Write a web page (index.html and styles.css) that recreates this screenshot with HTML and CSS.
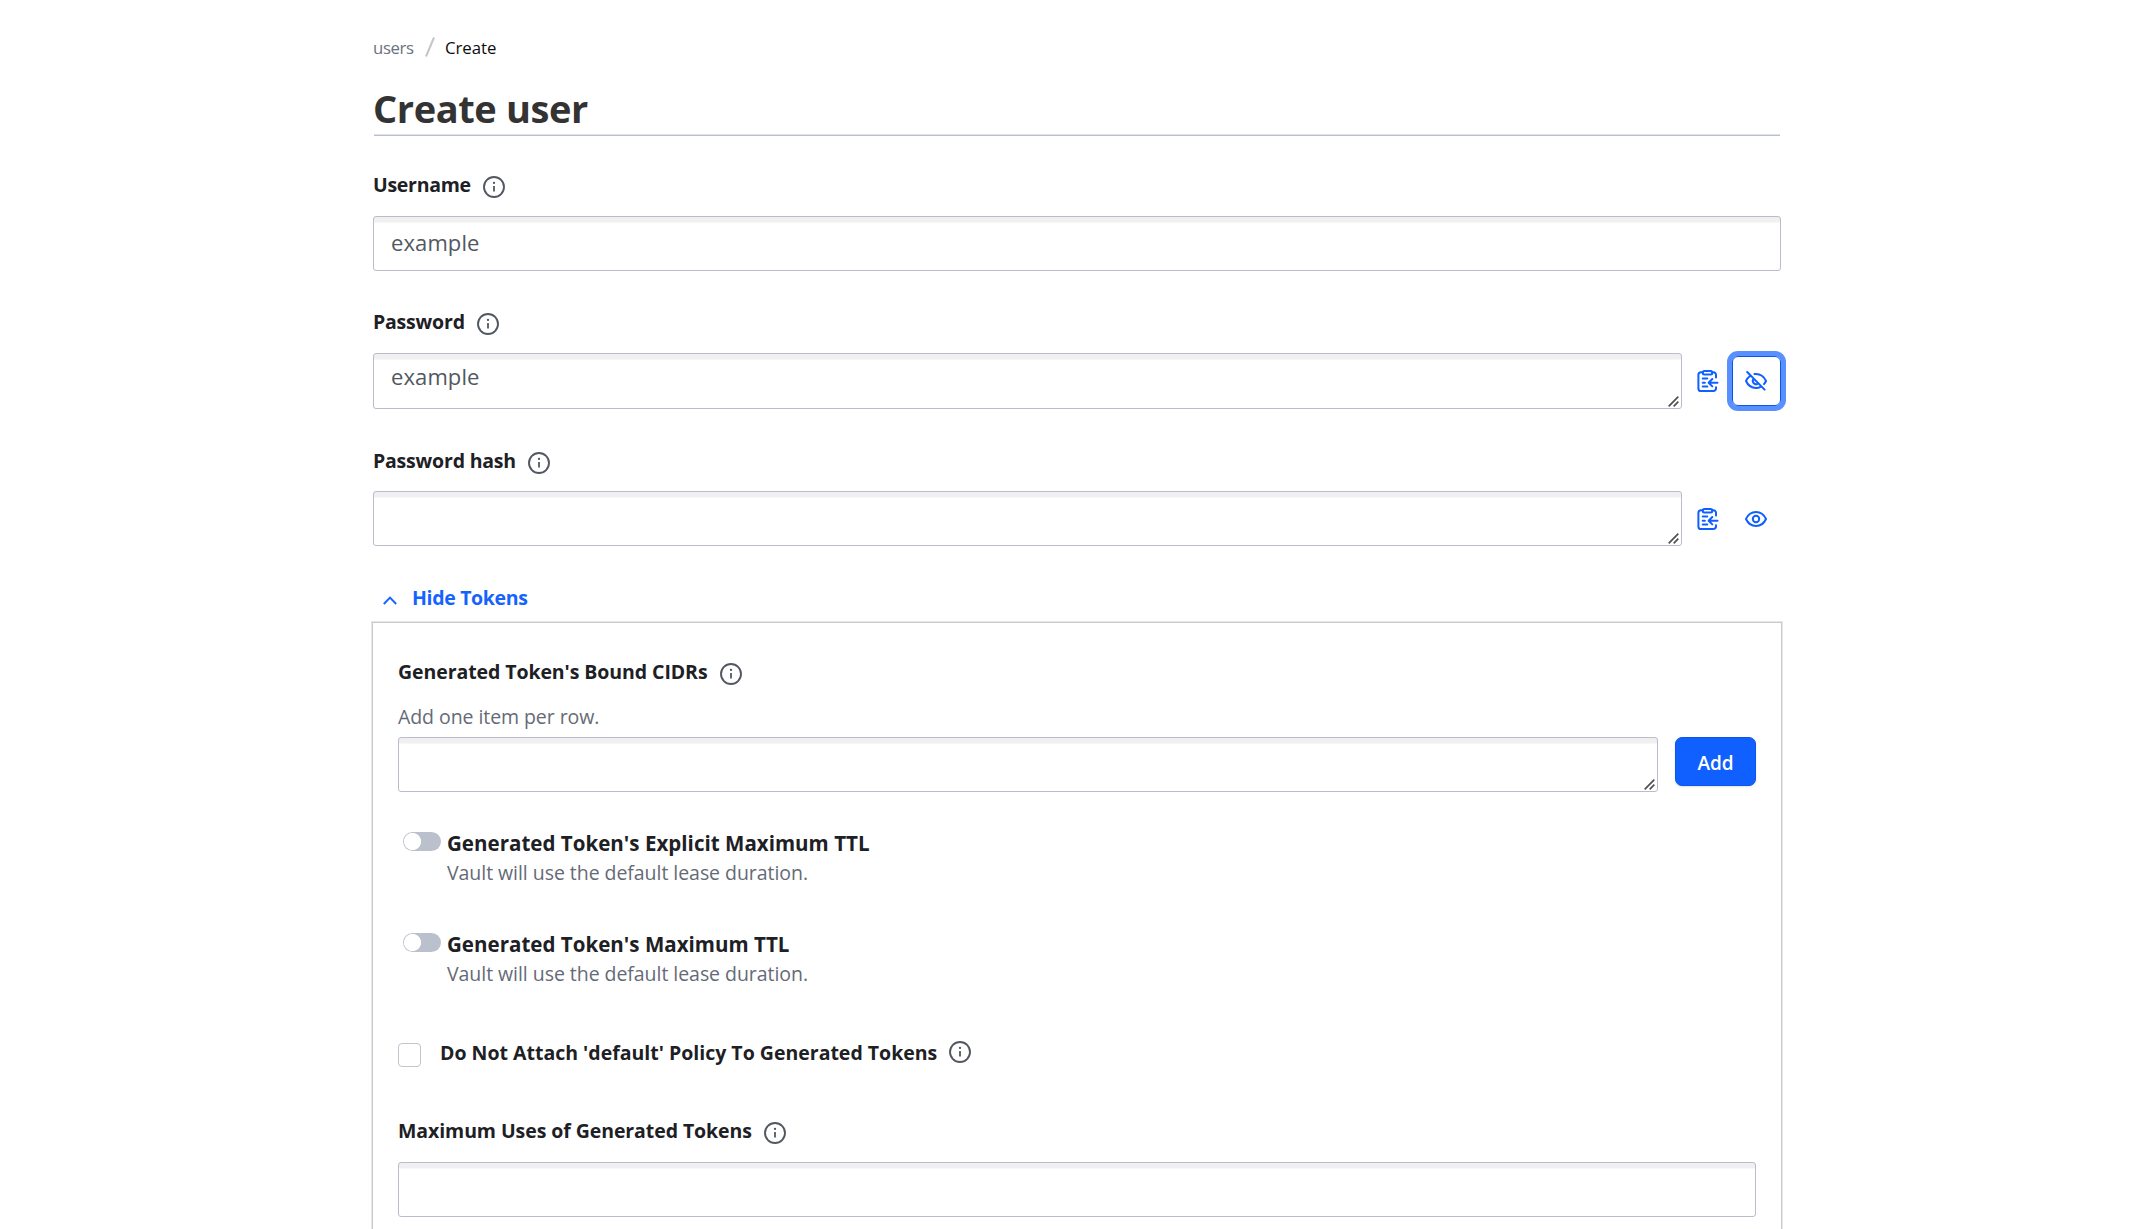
FILE: index.html
```html
<!DOCTYPE html>
<html lang="en">
<head>
<meta charset="utf-8">
<title>Create user</title>
<link rel="stylesheet" href="styles.css">
</head>
<body>
<svg class="sprite" width="0" height="0" aria-hidden="true">
  <symbol id="info" viewBox="0 0 22 22"><circle cx="11" cy="11" r="10" fill="none" stroke="currentColor" stroke-width="1.9"/><path d="M11 10v5.6" fill="none" stroke="currentColor" stroke-width="1.8"/><circle cx="11" cy="6.9" r="1.15" fill="currentColor"/></symbol>
  <symbol id="paste" viewBox="0 0 22 22"><g fill="none" stroke="currentColor" stroke-width="2" stroke-linecap="round" stroke-linejoin="round"><path d="M6 2.2H4A2.6 2.6 0 0 0 1.4 4.8v13.6A2.6 2.6 0 0 0 4 21h12.4a2.6 2.6 0 0 0 2.6-2.6V17.2M15 2.2h1.4A2.6 2.6 0 0 1 19 4.8v2.7"/><rect x="5.8" y="1" width="9.4" height="3.6" rx="1.5"/><path d="M5.7 8.6h4.600M5.700 12.700h2.200M5.700 16.600h4.600M20.500 12.700h-8.800M15.300 9l-3.700 3.700 3.700 3.700"/></g></symbol>
  <symbol id="eye" viewBox="0 0 22 22"><g fill="none" stroke="currentColor" stroke-width="2"><path d="M1 11C3 6.600 6.700 4 11 4s8 2.600 10 7c-2 4.400-5.700 7-10 7S3 15.400 1 11z" stroke-linejoin="round"/><circle cx="11" cy="11" r="3.200"/></g></symbol>
  <symbol id="eye-off" viewBox="0 0 22 22"><g fill="none" stroke="currentColor" stroke-width="2" stroke-linecap="round" stroke-linejoin="round"><path d="M2.200 2l17.400 17.600M5.300 5.700C3.500 7 2 8.800 1 11c2 4.400 5.700 7 10 7 1.700 0 3.200-.4 4.600-1.100M9.500 4.100C10 4 10.500 4 11 4c4.300 0 8 2.600 10 7-.5 1.200-1.200 2.200-2 3.100M8.600 9a3.200 3.200 0 0 0 4.500 4.500"/></g></symbol>
  <symbol id="grip" viewBox="0 0 11 11"><path d="M.7 10.300l9.600-9.600M5.700 10.300l4.600-4.600" fill="none" stroke="#505050" stroke-width="1.700"/></symbol>
</svg>

<main class="page">
  <nav class="crumbs">
    <a class="crumb-link">users</a>
    <svg class="crumb-slash" viewBox="0 0 10 20"><path d="M1 19.500L9 .5" stroke="#c2c5cb" stroke-width="2" fill="none"/></svg>
    <span class="crumb-current">Create</span>
  </nav>

  <h1 class="title">Create user</h1>

  <form>
    <div class="label-row label-first"><label class="label tight">Username</label><svg class="info"><use href="#info"/></svg></div>
    <div class="control">example</div>

    <div class="label-row label-password"><label class="label snug">Password</label><svg class="info"><use href="#info"/></svg></div>
    <div class="field-row">
      <div class="control area tall">example<svg class="grip"><use href="#grip"/></svg></div>
      <button type="button" class="icon-button"><svg class="icon"><use href="#paste"/></svg></button>
      <button type="button" class="icon-button focused"><svg class="icon"><use href="#eye-off"/></svg></button>
    </div>

    <div class="label-row label-hash"><label class="label snug">Password hash</label><svg class="info"><use href="#info"/></svg></div>
    <div class="field-row">
      <div class="control area"><svg class="grip"><use href="#grip"/></svg></div>
      <button type="button" class="icon-button"><svg class="icon"><use href="#paste"/></svg></button>
      <button type="button" class="icon-button"><svg class="icon"><use href="#eye"/></svg></button>
    </div>

    <div class="disclosure">
      <svg class="chevron" viewBox="0 0 14 9"><path d="M.8 8L7 1.600 13.200 8" fill="none" stroke="currentColor" stroke-width="1.900"/></svg>
      <span>Hide Tokens</span>
    </div>

    <section class="panel">
      <div class="label-row"><label class="label">Generated Token's Bound CIDRs</label><svg class="info"><use href="#info"/></svg></div>
      <p class="help">Add one item per row.</p>
      <div class="list-row">
        <div class="control area"><svg class="grip"><use href="#grip"/></svg></div>
        <button type="button" class="add">Add</button>
      </div>

      <div class="ttl ttl-first">
        <span class="switch"></span>
        <div>
          <div class="ttl-name">Generated Token's Explicit Maximum TTL</div>
          <div class="ttl-note">Vault will use the default lease duration.</div>
        </div>
      </div>
      <div class="ttl">
        <span class="switch"></span>
        <div>
          <div class="ttl-name">Generated Token's Maximum TTL</div>
          <div class="ttl-note">Vault will use the default lease duration.</div>
        </div>
      </div>

      <div class="check-row">
        <span class="checkbox"></span>
        <label class="label loose">Do Not Attach 'default' Policy To Generated Tokens</label>
        <svg class="info"><use href="#info"/></svg>
      </div>

      <div class="label-row label-uses"><label class="label">Maximum Uses of Generated Tokens</label><svg class="info"><use href="#info"/></svg></div>
      <div class="control"></div>
    </section>
  </form>
</main>
</body>
</html>
```
FILE: styles.css
```css
* { box-sizing: border-box; }

html, body { height: 100%; overflow: hidden; }

body {
  margin: 0;
  background: #fff;
  color: #1d2024;
  font-family: "Open Sans", "Noto Sans", sans-serif;
  font-size: 20px;
}

.sprite { position: absolute; }
svg { display: block; flex: none; }

.page {
  display: flex;
  flex-direction: column;
  width: 1408px;
  height: 1229px;
  margin: 0 auto;
  padding-top: 36px;
}
.page form { display: flex; flex: 1; flex-direction: column; min-height: 0; }

.crumbs {
  display: flex;
  align-items: center;
  height: 24px;
  font-size: 16.8px;
  line-height: 24px;
}
.crumb-link { width: 52px; color: #6b7280; letter-spacing: -0.4px; }
.crumb-slash { width: 10px; height: 20px; margin-top: -2px; }
.crumb-current { margin-left: 10px; color: #0c0c0e; letter-spacing: -0.05px; }

.title {
  margin: 23px 1px 0;
  height: 53px;
  border-bottom: 1px solid #bac1cc;
  box-shadow: inset 0 -1px #dfe1e8;
  color: #333;
  font-size: 38px;
  font-weight: 700;
  line-height: 50px;
  letter-spacing: -0.4px;
  text-indent: -1px;
}

.label-row { display: flex; align-items: center; height: 30px; margin-bottom: 17px; }
.label-first { margin-top: 33px; }
.label-password { margin-top: 35px; }
.label-hash { margin-top: 36px; margin-bottom: 16px; }
.label {
  padding-top: 2px;
  font-size: 19.5px;
  font-weight: 700;
  line-height: 30px;
  white-space: nowrap;
  letter-spacing: -0.08px;
}
.tight { letter-spacing: -0.28px; }
.snug { letter-spacing: -0.2px; }
.loose { letter-spacing: 0; }
.info { width: 22px; height: 22px; margin: 6px 0 0 12px; color: #525761; }

.control {
  position: relative;
  height: 55px;
  padding: 0 16px 0 17px;
  border: 1px solid #b9bdcb;
  border-radius: 3px;
  background: linear-gradient(#f0f0f1 4.5px, #fff 6.5px);
  color: #525761;
  font-size: 22px;
  line-height: 51px;
  letter-spacing: 0.1px;
}
.area { flex: 1; line-height: 45px; }
.tall { height: 56px; }
.grip { position: absolute; right: 2px; bottom: 1px; width: 11px; height: 11px; }

.field-row { display: flex; align-items: center; }
.icon-button {
  display: flex;
  align-items: center;
  justify-content: center;
  width: 49px;
  height: 50px;
  padding: 0 1px 0 0;
  border: 1px solid transparent;
  border-radius: 6px;
  background: none;
  color: #1060ff;
}
.area + .icon-button { margin-left: 1px; padding: 0 0 0 1px; }
.focused { border-color: #0c56e9; box-shadow: 0 0 0 5px #5990ff; }
.icon { width: 22px; height: 22px; }

.disclosure {
  display: flex;
  align-items: center;
  gap: 15px;
  height: 30px;
  margin: 36px 0 10px 10px;
  color: #1563ff;
  font-size: 19.5px;
  font-weight: 700;
  line-height: 30px;
  letter-spacing: -0.33px;
}
.disclosure span { padding-top: 2px; }
.chevron { width: 14px; height: 9px; margin-top: 6px; }

.panel {
  flex: 1;
  min-height: 0;
  margin: 0 -1px;
  padding: 33px 25px 0;
  overflow: hidden;
  border: 1px solid #c8cace;
  border-bottom: 0;
  box-shadow: 0 0 0 1px #e6e7ea;
}
.panel .label-row { margin-bottom: 16px; }
.help { margin: 0 0 5px; color: #656a76; font-size: 19.5px; line-height: 30px; letter-spacing: -0.07px; }
.list-row { display: flex; align-items: flex-start; gap: 17px; }
.add {
  width: 81px;
  height: 49px;
  padding: 3px 0 0;
  border: 1px solid #0c56e9;
  border-radius: 7px;
  background: #1060ff;
  box-shadow: 0 1px 2px #656a7633;
  color: #fff;
  font: 600 19px "Open Sans", "Noto Sans", sans-serif;
}

.ttl { display: flex; margin-top: 42px; }
.ttl-first { margin-top: 36px; }
.switch {
  width: 38px;
  height: 19px;
  margin: 4px 6px 0 5px;
  border-radius: 10px;
  background: radial-gradient(circle at 9.5px 9.5px, #fff 8.2px, #bac0cc 8.9px);
}
.ttl-name { padding-top: 1px; font-size: 20.5px; font-weight: 700; line-height: 29px; letter-spacing: 0.03px; }
.ttl-note { margin-bottom: -1px; color: #656a76; font-size: 19.5px; line-height: 30px; letter-spacing: -0.05px; }

.check-row { display: flex; align-items: center; height: 30px; margin-top: 49px; }
.check-row .info { margin-top: 0; }
.checkbox { width: 23px; height: 24px; margin: 6px 19px 0 0; border: 1px solid #c2c5cd; border-radius: 4px; }
.panel .label-uses { margin: 48px 0 17px; }
```
